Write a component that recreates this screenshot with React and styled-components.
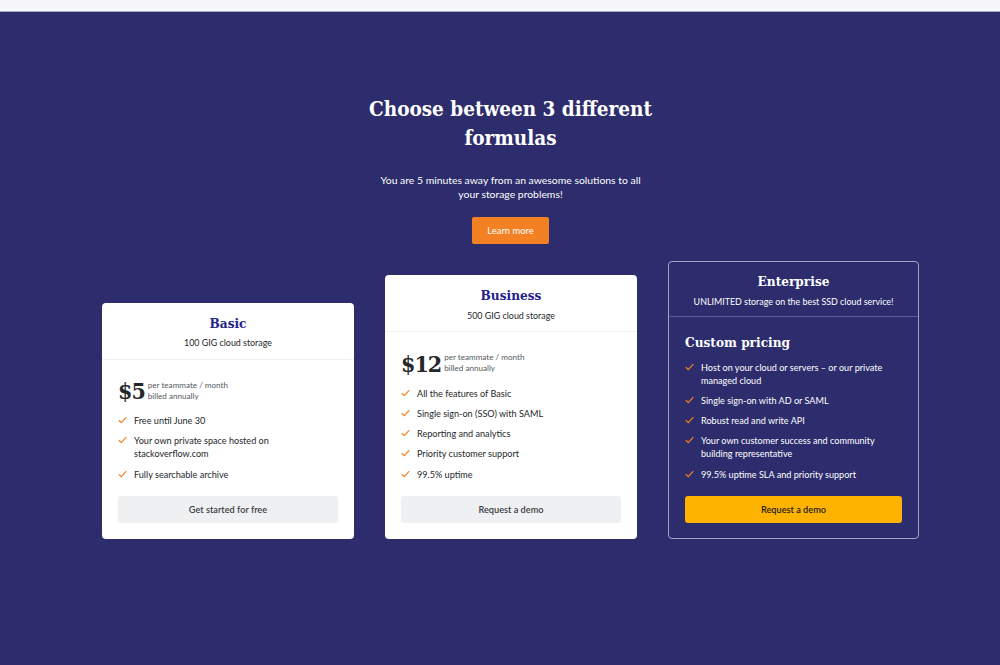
import React from "react";
import styled, { createGlobalStyle } from "styled-components";

const GlobalStyle = createGlobalStyle`
  html, body {
    margin: 0;
    padding: 0;
    background: #2d2c6c;
  }
  body {
    font-family: "Source Sans Pro", Lato, "Liberation Sans", sans-serif;
  }
`;

const slab = `"DejaVu Serif Condensed", "DejaVu Serif", serif`;

const TopStrip = styled.div`
  height: 11px;
  background: #f7f7f9;
  border-bottom: 1px solid #a6a6c2;
`;

const Section = styled.section`
  background: #2d2c6c;
  min-height: 653px;
  box-sizing: border-box;
  padding: 83px 0 0 21px;
  display: flex;
  flex-direction: column;
  align-items: center;
`;

const Intro = styled.div`
  text-align: center;
  display: flex;
  flex-direction: column;
  align-items: center;
`;

const Title = styled.h1`
  margin: 0;
  width: 330px;
  font-family: ${slab};
  font-weight: 700;
  font-size: 20.5px;
  line-height: 29px;
  color: #ffffff;
`;

const Lead = styled.p`
  margin: 20px 0 0;
  width: 270px;
  font-size: 10.4px;
  line-height: 14px;
  color: #ffffff;
`;

const LearnButton = styled.button`
  margin-top: 16px;
  width: 77px;
  height: 27px;
  border: 0;
  border-radius: 2px;
  background: #f48024;
  color: #ffffff;
  font-family: inherit;
  font-size: 9.4px;
  cursor: pointer;
`;

const Cards = styled.div`
  margin-top: 17px;
  display: flex;
  align-items: flex-end;
  gap: 31px;
`;

const Card = styled.div`
  width: ${(p) => (p.$dark ? "249px" : "252px")};
  background: ${(p) => (p.$dark ? "#2d2c6c" : "#ffffff")};
  border: ${(p) => (p.$dark ? "1px solid #a3a3c6" : "0")};
  border-radius: 4px;
  color: ${(p) => (p.$dark ? "#ffffff" : "#242729")};
  display: flex;
  flex-direction: column;
`;

const CardHead = styled.div`
  padding: ${(p) => (p.$dark ? "11px 8px 8.5px" : "12px 8px 9.5px")};
  text-align: center;
  border-bottom: 1px solid ${(p) => (p.$dark ? "#5d5c92" : "#eff0f1")};
`;

const PlanName = styled.h2`
  margin: 0;
  font-family: ${slab};
  font-weight: 700;
  font-size: 13.5px;
  line-height: 16px;
  color: ${(p) => (p.$dark ? "#ffffff" : "#23228c")};
`;

const Storage = styled.div`
  margin-top: 5.5px;
  font-size: 8.9px;
  line-height: 13px;
`;

const CardBody = styled.div`
  padding: ${(p) => (p.$dark ? "15px 16px 15px" : "16px 16px 16px")};
  display: flex;
  flex-direction: column;
`;

const PriceRow = styled.div`
  height: 30px;
  display: flex;
  align-items: center;
  gap: 3px;
`;

const Amount = styled.span`
  font-family: ${slab};
  font-weight: 700;
  font-size: 23px;
  letter-spacing: -1px;
  color: #242729;
`;

const PriceNote = styled.span`
  font-size: 8.1px;
  line-height: 11px;
  color: #535a60;
`;

const CustomPrice = styled.h3`
  margin: 0;
  font-family: ${slab};
  font-weight: 700;
  font-size: 13.5px;
  line-height: 20px;
`;

const Features = styled.ul`
  list-style: none;
  margin: 8.5px 0 0;
  padding: 0;
  display: flex;
  flex-direction: column;
  gap: 7.3px;
`;

const Feature = styled.li`
  display: flex;
  gap: 7px;
  font-size: 9.1px;
  line-height: 13px;
  svg {
    flex: none;
    margin-top: 2px;
  }
`;

const Action = styled.button`
  margin-top: 15.5px;
  height: 27px;
  width: 100%;
  border: 0;
  border-radius: 3px;
  background: ${(p) => (p.$primary ? "#ffb301" : "#eff0f1")};
  color: ${(p) => (p.$primary ? "#1c1c1c" : "#3b4045")};
  font-family: inherit;
  font-weight: 600;
  font-size: 9.2px;
  cursor: pointer;
`;

const Check = () => (
  <svg width="9" height="8" viewBox="0 0 9 8" fill="none">
    <path d="M0.8 4.2 L3.3 6.6 L8.3 1.2" stroke="#f48024" strokeWidth="1.2" />
  </svg>
);

const plans = [
  {
    name: "Basic",
    storage: "100 GIG cloud storage",
    price: "$5",
    features: [
      "Free until June 30",
      "Your own private space hosted on stackoverflow.com",
      "Fully searchable archive",
    ],
    action: "Get started for free",
  },
  {
    name: "Business",
    storage: "500 GIG cloud storage",
    price: "$12",
    features: [
      "All the features of Basic",
      "Single sign-on (SSO) with SAML",
      "Reporting and analytics",
      "Priority customer support",
      "99.5% uptime",
    ],
    action: "Request a demo",
  },
  {
    name: "Enterprise",
    storage: "UNLIMITED storage on the best SSD cloud service!",
    dark: true,
    features: [
      "Host on your cloud or servers – or our private managed cloud",
      "Single sign-on with AD or SAML",
      "Robust read and write API",
      "Your own customer success and community building representative",
      "99.5% uptime SLA and priority support",
    ],
    action: "Request a demo",
  },
];

function Plan({ plan }) {
  return (
    <Card $dark={plan.dark}>
      <CardHead $dark={plan.dark}>
        <PlanName $dark={plan.dark}>{plan.name}</PlanName>
        <Storage>{plan.storage}</Storage>
      </CardHead>
      <CardBody $dark={plan.dark}>
        {plan.price ? (
          <PriceRow>
            <Amount>{plan.price}</Amount>
            <PriceNote>
              per teammate / month
              <br />
              billed annually
            </PriceNote>
          </PriceRow>
        ) : (
          <CustomPrice>Custom pricing</CustomPrice>
        )}
        <Features>
          {plan.features.map((f) => (
            <Feature key={f}>
              <Check />
              <span>{f}</span>
            </Feature>
          ))}
        </Features>
        <Action $primary={plan.dark}>{plan.action}</Action>
      </CardBody>
    </Card>
  );
}

export default function App() {
  return (
    <>
      <GlobalStyle />
      <TopStrip />
      <Section>
        <Intro>
          <Title>Choose between 3 different formulas</Title>
          <Lead>
            You are 5 minutes away from an awesome solutions to all your storage
            problems!
          </Lead>
          <LearnButton>Learn more</LearnButton>
        </Intro>
        <Cards>
          {plans.map((p) => (
            <Plan key={p.name} plan={p} />
          ))}
        </Cards>
      </Section>
    </>
  );
}
